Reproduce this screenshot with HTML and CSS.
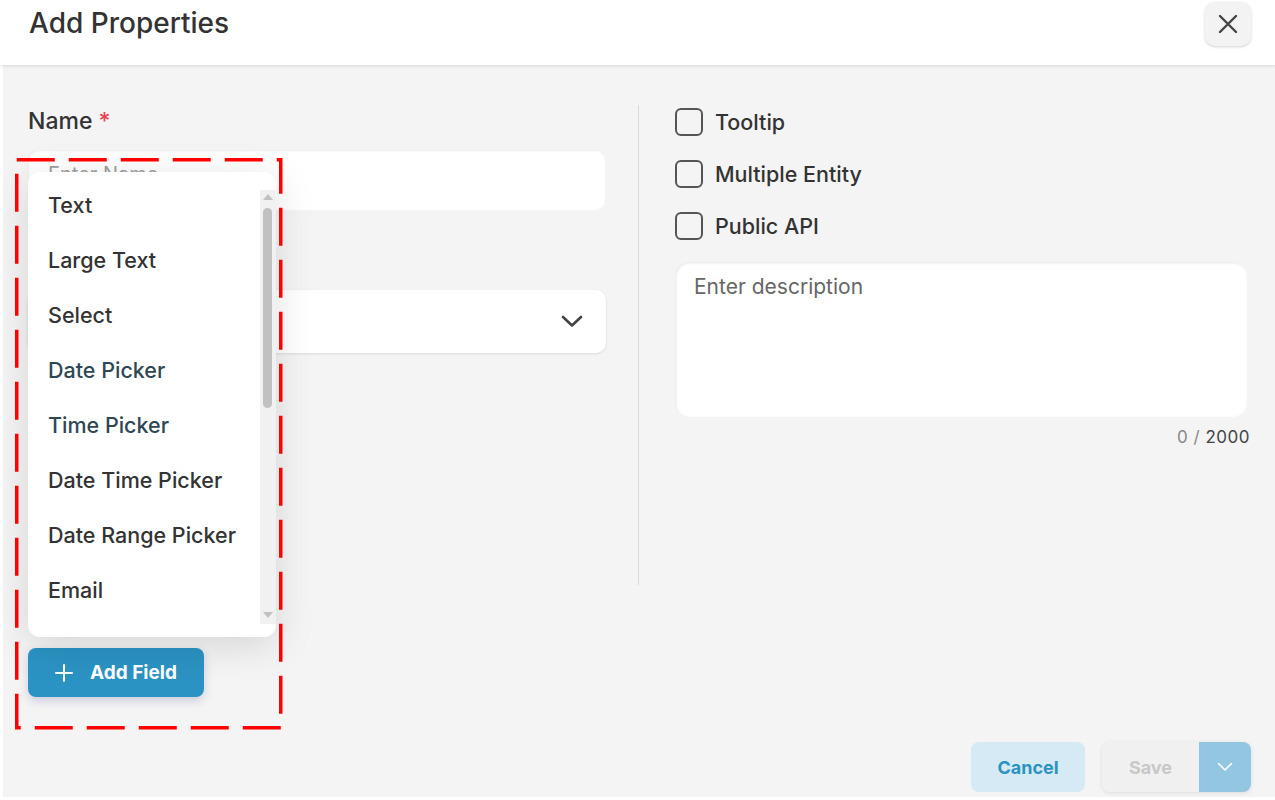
FILE: index.html
```html
<!DOCTYPE html>
<html lang="en">
<head>
<meta charset="utf-8">
<title>Add Properties</title>
<link rel="stylesheet" href="styles.css">
</head>
<body>
<header class="header">
  <h1 class="title">Add Properties</h1>
  <button class="close" aria-label="Close">
    <svg width="22" height="22" viewBox="0 0 22 22"><path d="M3 3 L19 19 M19 3 L3 19" stroke="#444" stroke-width="2.4" stroke-linecap="round" fill="none"/></svg>
  </button>
</header>
<main class="panel">
  <div class="content">
    <section class="col-left">
      <div class="label">Name <span class="req">*</span></div>
      <div class="input"><span class="ph">Enter Name</span></div>
      <div class="type-spacer"></div>
      <div class="select">
        <svg width="22" height="13" viewBox="0 0 22 13"><path d="M2 2 L11 10.5 L20 2" stroke="#444" stroke-width="2.6" stroke-linecap="round" stroke-linejoin="round" fill="none"/></svg>
      </div>
      <button class="add-field">
        <svg width="20" height="20" viewBox="0 0 20 20"><path d="M10 2 V18 M2 10 H18" stroke="#fff" stroke-width="2" stroke-linecap="round"/></svg>
        <span>Add Field</span>
      </button>
    </section>
    <div class="divider"></div>
    <section class="col-right">
      <div class="checks">
        <label class="check"><span class="box"></span><span>Tooltip</span></label>
        <label class="check"><span class="box"></span><span>Multiple Entity</span></label>
        <label class="check"><span class="box"></span><span>Public API</span></label>
      </div>
      <div class="textarea"><span class="ph-desc">Enter description</span></div>
      <div class="counter"><span class="zero">0 /</span> 2000</div>
    </section>
  </div>
  <footer class="footer">
    <button class="cancel">Cancel</button>
    <div class="save-group">
      <button class="save">Save</button>
      <button class="save-more" aria-label="More">
        <svg width="16" height="10" viewBox="0 0 16 10"><path d="M1.5 1.5 L8 8 L14.5 1.5" stroke="#fff" stroke-width="1.6" stroke-linecap="round" stroke-linejoin="round" fill="none"/></svg>
      </button>
    </div>
  </footer>
</main>

<div class="dropdown">
  <ul class="options">
    <li class="opt">Text</li>
    <li class="opt">Large Text</li>
    <li class="opt">Select</li>
    <li class="opt slate">Date Picker</li>
    <li class="opt slate">Time Picker</li>
    <li class="opt">Date Time Picker</li>
    <li class="opt">Date Range Picker</li>
    <li class="opt">Email</li>
  </ul>
  <div class="scrollbar">
    <span class="arrow up"></span>
    <span class="thumb"></span>
    <span class="arrow down"></span>
  </div>
</div>

<svg class="highlight" width="270" height="574" viewBox="0 0 270 574">
  <rect x="1.75" y="1.75" width="264" height="568" fill="none" stroke="#ff0000" stroke-width="3.5" stroke-dasharray="38 14"/>
</svg>
</body>
</html>
```

FILE: styles.css
```css
* { box-sizing: border-box; }

html, body {
  margin: 0;
  padding: 0;
  background: #ffffff;
  width: 1275px;
  height: 800px;
  overflow: hidden;
  font-family: Inter, Lato, sans-serif;
  color: #333333;
}

button {
  font-family: inherit;
  border: none;
  cursor: pointer;
}

.header {
  height: 65px;
  display: flex;
  align-items: center;
  justify-content: space-between;
  padding: 0 24px 0 29px;
  background: #ffffff;
  position: relative;
  z-index: 2;
  box-shadow: 0 1px 3px rgba(0, 0, 0, 0.12);
}

.title {
  margin: 0 0 19px 0;
  font-size: 28px;
  font-weight: 500;
  color: #333333;
}

.close {
  width: 46px;
  height: 44px;
  margin-bottom: 17px;
  border-radius: 10px;
  background: #f3f3f3;
  box-shadow: 0 1px 3px rgba(0, 0, 0, 0.18);
  display: flex;
  align-items: center;
  justify-content: center;
}

.panel {
  margin-left: 3px;
  height: 732px;
  background: #f4f4f4;
  display: flex;
  flex-direction: column;
}

.content {
  height: 677px;
  display: flex;
}

.col-left {
  margin-left: 25px;
  width: 578px;
  padding-top: 43px;
  display: flex;
  flex-direction: column;
  align-items: flex-start;
}

.label {
  font-size: 23px;
  line-height: 26px;
  font-weight: 500;
  color: #333333;
}

.req { color: #e8424f; }

.input {
  margin-top: 16px;
  width: 577px;
  height: 60px;
  border-radius: 10px;
  background: #ffffff;
  box-shadow: inset 1px 1px 2px rgba(0, 0, 0, 0.08);
  padding: 12px 0 0 20px;
}

.ph { font-size: 20px; line-height: 24px; color: #a0a0a0; }

.type-spacer { height: 80px; }

.select {
  width: 578px;
  height: 63px;
  border-radius: 10px;
  background: #ffffff;
  box-shadow: 0 1px 3px rgba(0, 0, 0, 0.1);
  display: flex;
  align-items: center;
  justify-content: flex-end;
  padding-right: 23px;
}

.add-field {
  margin-top: 295px;
  width: 176px;
  height: 49px;
  border-radius: 8px;
  background: #2b93c3;
  color: #ffffff;
  font-size: 19px;
  font-weight: 700;
  display: flex;
  align-items: center;
  gap: 16px;
  padding-left: 26px;
  box-shadow: 0 4px 10px rgba(70, 70, 150, 0.22);
}

.divider {
  margin-left: 32px;
  margin-top: 40px;
  width: 1px;
  height: 480px;
  background: #dcdcdc;
}

.col-right {
  margin-left: 36px;
  width: 575px;
  padding-top: 43px;
  display: flex;
  flex-direction: column;
}

.checks {
  display: flex;
  flex-direction: column;
  gap: 24px;
}

.check {
  display: flex;
  align-items: center;
  gap: 12px;
  height: 28px;
  font-size: 21.5px;
  font-weight: 500;
  color: #333333;
}

.box {
  width: 28px;
  height: 28px;
  border: 2.5px solid #555555;
  border-radius: 6px;
}

.textarea {
  margin-top: 22px;
  width: 572px;
  height: 155px;
  border-radius: 14px;
  background: #ffffff;
  box-shadow: inset 1px 1px 3px rgba(0, 0, 0, 0.1);
  padding: 12px 19px;
}

.ph-desc { font-size: 21px; font-weight: 400; color: #666666; }

.counter {
  margin-top: 10px;
  text-align: right;
  font-size: 17px;
  line-height: 20px;
  letter-spacing: 0.5px;
  color: #444444;
}

.zero { color: #888888; }

.footer {
  display: flex;
  justify-content: flex-end;
  gap: 17px;
  padding-right: 24px;
}

.cancel {
  width: 114px;
  height: 50px;
  border-radius: 8px;
  background: #d5eaf5;
  color: #2b93c3;
  font-size: 18px;
  font-weight: 700;
}

.save-group {
  display: flex;
  border-radius: 8px;
  box-shadow: 0 1px 4px rgba(0, 0, 0, 0.1);
}

.save {
  width: 97px;
  height: 50px;
  border-radius: 8px 0 0 8px;
  background: #f0f0f0;
  color: #c8c8c8;
  font-size: 18px;
  font-weight: 700;
}

.save-more {
  width: 52px;
  height: 50px;
  border-radius: 0 8px 8px 0;
  background: #93c6e0;
  display: flex;
  align-items: center;
  justify-content: center;
}

/* Overlay dropdown */
.dropdown {
  position: absolute;
  left: 28px;
  top: 172px;
  width: 248px;
  height: 465px;
  background: #ffffff;
  border-radius: 12px;
  overflow: hidden;
  z-index: 5;
  box-shadow: 0 8px 40px rgba(0, 0, 0, 0.13);
}

.options {
  list-style: none;
  margin: 0;
  padding: 5px 0 0 0;
}

.opt {
  height: 55px;
  display: flex;
  align-items: center;
  padding-left: 20px;
  font-size: 21.5px;
  font-weight: 500;
  color: #333333;
}

.opt.slate { color: #2f4753; }

.scrollbar {
  position: absolute;
  right: 0;
  top: 18px;
  bottom: 13px;
  width: 16px;
  background: #f1f1f1;
}

.thumb {
  position: absolute;
  left: 3px;
  top: 18px;
  width: 9px;
  height: 200px;
  border-radius: 5px;
  background: #c1c1c1;
}

.arrow {
  position: absolute;
  left: 3px;
  width: 0;
  height: 0;
  border-left: 5px solid transparent;
  border-right: 5px solid transparent;
}

.arrow.up { top: 4px; border-bottom: 6px solid #c1c1c1; }
.arrow.down { bottom: 6px; border-top: 6px solid #c1c1c1; }

.highlight {
  position: absolute;
  left: 15px;
  top: 158px;
  z-index: 6;
}
```
